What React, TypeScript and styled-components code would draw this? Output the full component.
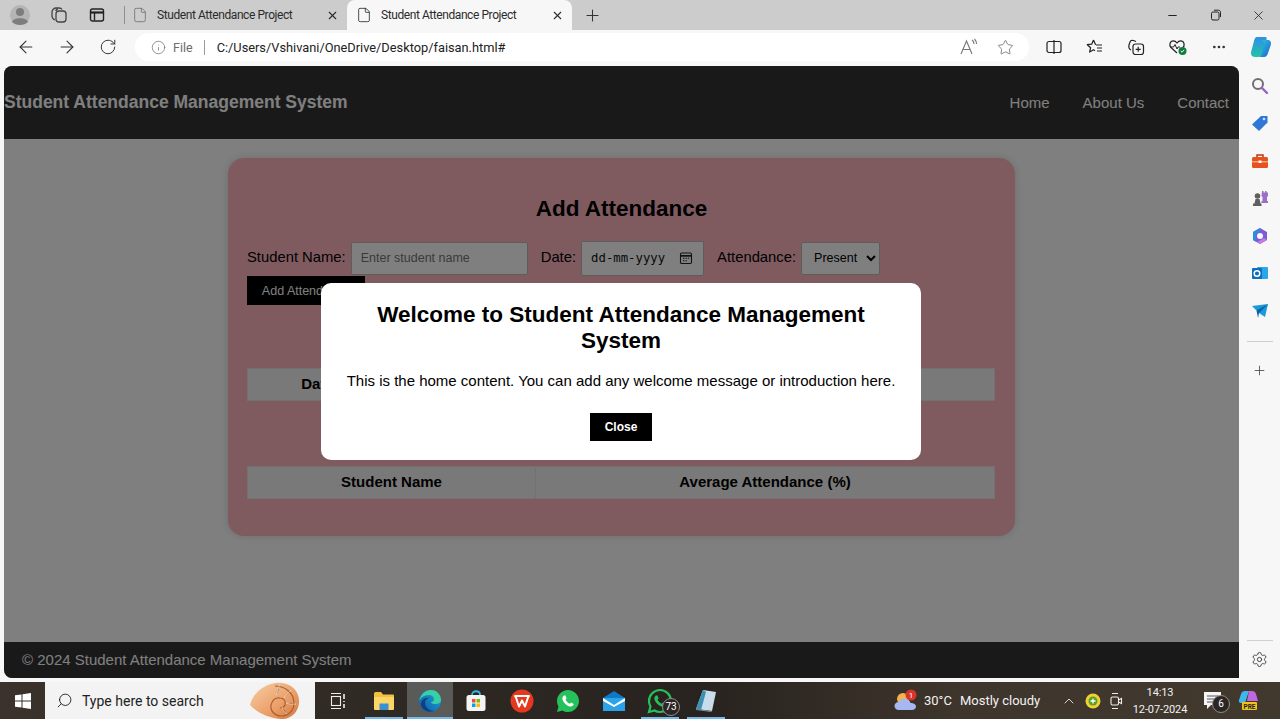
import React from "react";
import styled, { createGlobalStyle } from "styled-components";
import {
  ArrowLeft, ArrowRight, RotateCw, Info, Star, Minus, X, Plus, Search, MoreHorizontal,
  Settings, File, ChevronUp,
} from "lucide-react";

const Global = createGlobalStyle`
  html, body { margin: 0; padding: 0; height: 100%; overflow: hidden; }
  body { font-family: "Liberation Sans", Arial, sans-serif; background: #f7f7f7; }
  * { box-sizing: border-box; }
`;

const Screen = styled.div`
  width: 1280px; height: 719px; display: flex; flex-direction: column; background: #f7f7f7; overflow: hidden;
`;

/* ---------- browser tabs ---------- */
const TabStrip = styled.div`
  height: 30px; background: #cccccc; display: flex; align-items: flex-end; flex: none;
`;
const StripIcon = styled.div<{ $w: number }>`
  width: ${(p) => p.$w}px; height: 30px; display: flex; align-items: center; justify-content: center; color: #333; flex: none;
`;
const StripDivider = styled.div`
  width: 1px; height: 18px; background: #8f8f8f; margin: 0 0 6px 7px; flex: none;
`;
const Tab = styled.div<{ $active?: boolean; $w: number }>`
  width: ${(p) => p.$w}px; height: 30px; flex: none; display: flex; align-items: center;
  padding: 0 8px 0 ${(p) => (p.$active ? 9 : 7)}px;
  background: ${(p) => (p.$active ? "#f7f7f7" : "transparent")};
  border-radius: 8px 8px 0 0;
  color: #2b2b2b;
  font: 12px Roboto, sans-serif;
`;
const TabTitle = styled.span`
  flex: 1; margin-left: 9px; white-space: nowrap; letter-spacing: -0.035em;
`;
const WindowControls = styled.div`
  margin-left: auto; display: flex; height: 30px; align-items: center; color: #222;
`;
const WinBtn = styled.div`
  width: 43px; height: 30px; display: flex; align-items: center; justify-content: center;
`;

/* ---------- toolbar ---------- */
const Toolbar = styled.div`
  height: 36px; flex: none; display: flex; align-items: center; padding: 0 0 2px 5px; background: #f7f7f7; color: #333;
`;
const ToolIcon = styled.div`
  width: 41px; height: 32px; flex: none; display: flex; align-items: center; justify-content: center;
`;
const ExtIcon = styled(ToolIcon)`
  width: 41.4px;
`;
const AddressBar = styled.div`
  width: 894px; height: 28px; margin-left: 7px; margin-right: 4px; border-radius: 14px; background: #fff; display: flex; align-items: center;
  padding-left: 16px; flex: none; font: 12.8px Roboto, sans-serif; color: #222;
`;
const FileLabel = styled.span`
  margin-left: 7px; color: #6b6b6b; font-size: 12.5px;
`;
const AddrDivider = styled.span`
  width: 1px; height: 15px; background: #9a9a9a; margin: 0 12px 0 11px;
`;
const Url = styled.span`
  flex: 1; white-space: nowrap;
`;
const AddrIcon = styled.div<{ $end?: boolean }>`
  width: 37px; display: flex; align-items: center; justify-content: center; color: #666; margin-right: ${(p) => (p.$end ? 5 : 0)}px;
`;

/* ---------- main ---------- */
const Middle = styled.div`
  flex: 1; min-height: 0; display: flex; padding-left: 4px;
`;
const Page = styled.div`
  position: relative; width: 1235px; height: 612px; flex: none; background: #fff; display: flex; flex-direction: column;
  border-radius: 8px 8px 0 8px; overflow: hidden; font-size: 15px;
`;
const Navbar = styled.header`
  height: 73px; flex: none; background: #333; color: #fff; display: flex; align-items: center; justify-content: space-between; padding-right: 10px;
`;
const Brand = styled.div`
  font-weight: 700; font-size: 17.5px;
`;
const NavLinks = styled.nav`
  display: flex; gap: 33px; font-size: 15px; padding-bottom: 1px;
`;
const Content = styled.main`
  flex: 1; padding-top: 19px; display: flex; justify-content: center; align-items: flex-start;
`;
const Card = styled.section`
  width: 787px; height: 378px; background: #ffb6c1; border-radius: 16px; padding: 19px; box-shadow: 0 0 8px rgba(0,0,0,.15); color: #000;
`;
const CardTitle = styled.h2`
  margin: 18px 0 19px; font-size: 22.5px; line-height: 27px; text-align: center;
`;
const FormRow = styled.div`
  display: flex; align-items: center; gap: 13px; height: 34px;
`;
const Field = styled.div`
  display: flex; align-items: center; gap: 5px;
`;
const FieldLabel = styled.span`
  font-size: 14.8px; margin-bottom: 2px;
`;
const TextInput = styled.input`
  width: 177px; height: 33px; padding: 0 9px; border: 1px solid #bbb; border-radius: 2px; background: #fff; font: 12.5px "Liberation Sans", sans-serif;
`;
const DateBox = styled.div`
  width: 123px; height: 35px; border: 1px solid #bbb; border-radius: 2px; background: #fff; display: flex; align-items: center; justify-content: space-between;
  padding: 0 10px 0 9px; font: 12.3px "DejaVu Sans Mono", monospace; color: #111;
`;
const Select = styled.select`
  width: 79px; height: 33px; padding-left: 8px; border: 1px solid #bbb; border-radius: 2px; background: #fff; font: 12.5px "Liberation Sans", sans-serif; color: #000;
`;
const SubmitBtn = styled.button`
  display: block; margin-top: 1px; width: 118px; height: 29px; border: 0; background: #000; color: #fff; font: 12.5px "Liberation Sans", sans-serif; padding: 0;
`;
const DataTable = styled.table<{ $top: number }>`
  width: 748px; margin-top: ${(p) => p.$top}px; table-layout: fixed; border-collapse: collapse; font-size: 15px;
`;
const Th = styled.th<{ $w?: number }>`
  width: ${(p) => (p.$w ? `${p.$w}px` : "auto")}; height: 32px; padding: 0 0 2px; background: #f2f2f2; border: 1px solid #e4e4e4; font-weight: 700; text-align: center;
`;
const Footer = styled.footer`
  height: 36px; flex: none; background: #333; color: #fff; display: flex; align-items: center; padding: 0 0 2px 18px; font-size: 15px;
`;
const Overlay = styled.div`
  position: absolute; inset: 0; background: rgba(0, 0, 0, 0.5); display: flex; align-items: center; justify-content: center;
`;
const Modal = styled.div`
  width: 600px; height: 177px; background: #fff; border-radius: 10px; padding: 19px 20px 0; text-align: center; color: #000; margin: -1px 1px 0 0;
`;
const ModalTitle = styled.h2`
  margin: 0 0 18px; font-size: 22.5px; line-height: 26px;
`;
const ModalText = styled.p`
  margin: 0 0 23px; font-size: 15px; line-height: 18px; white-space: nowrap;
`;
const CloseBtn = styled.button`
  width: 62px; height: 28px; border: 0; background: #000; color: #fff; font: 700 12px "Liberation Sans", sans-serif; padding: 0;
`;

/* ---------- edge sidebar ---------- */
const Sidebar = styled.aside`
  width: 41px; flex: none; display: flex; flex-direction: column; align-items: center; padding-top: 1px; color: #444;
`;
const SideIcon = styled.div`
  width: 40px; height: 37.5px; display: flex; align-items: center; justify-content: center; flex: none;
`;
const SideDivider = styled.div<{ $top: number; $bottom: number }>`
  width: 26px; height: 1px; background: #cfcfcf; flex: none; margin: ${(p) => p.$top}px 0 ${(p) => p.$bottom}px;
`;

/* ---------- taskbar ---------- */
const Taskbar = styled.div`
  height: 37px; flex: none; margin-top: 4px; display: flex; align-items: center; color: #f2f2f2;
  background: linear-gradient(90deg, #3a322b 0%, #2e2823 35%, #28231f 55%, #3e352c 75%, #41382e 100%);
  font: 13px Roboto, sans-serif;
`;
const StartBtn = styled.div`
  width: 45px; height: 37px; display: flex; align-items: center; justify-content: center; flex: none;
`;
const SearchBox = styled.div`
  position: relative; width: 270px; height: 37px; background: #f3f3f3; color: #222; display: flex; align-items: center; padding-left: 11px; gap: 9px; font-size: 14px; flex: none;
`;
const Shell = styled.div`
  position: absolute; left: 204px; top: -1px; width: 52px; height: 39px;
`;
const TaskIcon = styled.div<{ $on?: boolean; $bar?: boolean }>`
  position: relative; width: 46px; height: 37px; flex: none; display: flex; align-items: center; justify-content: center;
  background: ${(p) => (p.$on ? "#5a5a58" : "transparent")};
  &::after {
    content: ""; display: ${(p) => (p.$bar || p.$on ? "block" : "none")}; position: absolute; left: ${(p) => (p.$on ? 0 : 4)}px; right: ${(p) => (p.$on ? 0 : 4)}px; bottom: 0; height: 2px; background: #76b9ed;
  }
`;
const Badge = styled.span<{ $x?: number; $y?: number }>`
  position: absolute; left: ${(p) => p.$x ?? 25}px; top: ${(p) => p.$y ?? 16}px; width: 18px; height: 18px; border-radius: 50%; background: #2b2622; border: 1px solid #8d8d8d; color: #fff;
  font: 10px/16px Roboto, sans-serif; text-align: center;
`;
const Tray = styled.div`
  margin-left: auto; display: flex; align-items: center; height: 37px; padding-right: 11px;
`;
const Weather = styled.div`
  display: flex; align-items: center; width: 163px;
  font-size: 13px; white-space: nowrap;
`;
const WeatherTemp = styled.span`
  margin: 0 8px 0 6px;
`;
const TrayIcon = styled.div<{ $w: number }>`
  position: relative; width: ${(p) => p.$w}px; display: flex; align-items: center; justify-content: center; flex: none;
`;
const Clock = styled.div`
  width: 74px; margin-left: -4px; text-align: center; font-size: 11px; letter-spacing: -0.1px; line-height: 17px; flex: none;
`;

/* ---------- drawn icons ---------- */
const Avatar = () => (
  <svg width="20" height="22" viewBox="0 0 20 22"><circle cx="10" cy="11" r="10" fill="#b5b5b5" /><circle cx="10" cy="8" r="4" fill="#7d7d7d" /><path d="M2 18c1-5 15-5 16 0-4 4-12 4-16 0z" fill="#7d7d7d" /></svg>
);
const Workspaces = () => (
  <svg width="18" height="18" viewBox="0 0 18 18" fill="none" stroke="#444" strokeWidth="1.3"><rect x="6" y="5" width="10" height="11" rx="3" /><path d="M5 14c-2-1-3-2-3-4V6c0-2 2-4 4-4h3c1.500 0 2.500.5 3 1.500" /><path d="M6 5c0-1 1-2 2-2" /></svg>
);
const TabActions = () => (
  <svg width="16" height="16" viewBox="0 0 16 16" fill="none" stroke="#222" strokeWidth="1.4"><rect x="1.500" y="2" width="13" height="12" rx="2" /><path d="M1.500 5.500h13" strokeWidth="2.200" /><path d="M5.500 5.500v8" /></svg>
);
const ReadAloud = () => (
  <svg width="20" height="18" viewBox="0 0 20 18" fill="none" stroke="#777" strokeWidth="1.1"><path d="M2 16 7.500 3 13 16M4 11.500h7" /><path d="M13 2c1.500 1 2 2.500 2 4M15.500 1c1.500 1.500 2 3 2 5" /></svg>
);
const SplitScreen = () => (
  <svg width="16" height="16" viewBox="0 0 16 16" fill="none" stroke="#222" strokeWidth="1.2"><rect x="1" y="2.500" width="14" height="11" rx="2" /><path d="M8 1v14" /></svg>
);
const Favorites = () => (
  <svg width="18" height="18" viewBox="0 0 18 18" fill="none" stroke="#222" strokeWidth="1.2"><path d="M7.500 2 9.500 6.500h-.2M7.500 2 5.700 6.200 1.300 6.700l3.300 3-1 4.400 3.900-2.300 1.500.9" strokeLinejoin="round" /><path d="M10 7h6M11 10h5M11 13h5" /></svg>
);
const Collections = () => (
  <svg width="18" height="18" viewBox="0 0 18 18" fill="none" stroke="#222" strokeWidth="1.2"><path d="M4 12C2 11 1.500 9 2 7l1-3c.5-1.500 2-2 3.500-1.500L9 3.500" /><rect x="6" y="6" width="10.500" height="10.500" rx="2.500" /><path d="M11.200 8.800v5M8.700 11.300h5" /></svg>
);
const Heart = () => (
  <svg width="20" height="18" viewBox="0 0 20 18" fill="none"><path d="M9 15 3 9.500C.8 7 2 3 5 2.800c1.700-.1 3 .8 4 2.200 1-1.400 2.300-2.300 4-2.200 3 .2 4.200 4 2 6.700" stroke="#222" strokeWidth="1.2" /><path d="M2.500 9h3l1.500-2.500 2 4.500 1-2h2" stroke="#222" strokeWidth="1" /><circle cx="14.500" cy="13" r="4" fill="#107c41" /><path d="m12.800 13 1.200 1.200 2.200-2.300" stroke="#fff" strokeWidth="1" /></svg>
);
const Copilot = () => (
  <svg width="24" height="24" viewBox="0 0 24 24"><defs><linearGradient id="cpa" x1="0" y1="0" x2="0" y2="1"><stop offset="0" stopColor="#2f8fe8" /><stop offset="1" stopColor="#20c4a8" /></linearGradient><linearGradient id="cpb" x1="0" y1="0" x2="1" y2="1"><stop offset="0" stopColor="#2fd0d8" /><stop offset="1" stopColor="#1d5fd6" /></linearGradient></defs><path d="M8 2h8c2 0 2 1 1.500 2.500L13 19c-.7 2.200-2 3-4 3H6c-3.500 0-4.500-3-3.800-5.500L5 6c.7-2.500 1.500-4 3-4z" fill="url(#cpa)" /><path d="M12 5h7c2.500 0 3.500 2.500 2.800 5L19 18c-.7 2.500-2 4-4 4H9c2 0 3-1 3.500-3L15 10c.5-2-.5-5-3-5z" fill="url(#cpb)" /></svg>
);
const CalendarGlyph = () => (
  <svg width="14" height="14" viewBox="0 0 14 14" fill="none" stroke="#222" strokeWidth="1.100"><rect x="1.500" y="2" width="11" height="10.500" rx="1.200" /><path d="M1.500 4.800h11" strokeWidth="1.800" /><path d="M4 7.200h1.400M6.400 7.200h1.400M8.800 7.200h1.400M4 9.800h1.400M6.400 9.800h1.400" /></svg>
);
const SideSearch = () => (
  <svg width="18" height="18" viewBox="0 0 18 18" fill="none"><circle cx="7" cy="7" r="5" stroke="#6f6f6f" strokeWidth="2" /><path d="m11 11 5 5" stroke="#9a5fc9" strokeWidth="2.400" strokeLinecap="round" /></svg>
);
const SideTag = () => (
  <svg width="18" height="18" viewBox="0 0 18 18"><path d="M1 10.500 10 2h6.500v6.500L8 17z" fill="#2f78d8" /><circle cx="13" cy="5" r="1.300" fill="#cfe2fa" /></svg>
);
const SideBriefcase = () => (
  <svg width="18" height="16" viewBox="0 0 18 16"><path d="M6 4V2h6v2" fill="none" stroke="#b83a12" strokeWidth="1.500" /><rect x="1" y="4" width="16" height="11" rx="1.500" fill="#e8501d" /><path d="M1 8.800h16" stroke="#fbc9a8" strokeWidth="1" /><rect x="7.500" y="7.500" width="3" height="2.500" fill="#fff" /></svg>
);
const SideChess = () => (
  <svg width="18" height="18" viewBox="0 0 18 18"><path d="M11 2h1.500v1.500H14V2h1.500v1.500H17V2v5l-1 1v4h1v2h-6.500v-2h1V8l-1-1z" fill="#9a6fc8" /><circle cx="6.500" cy="7" r="2.800" fill="#5f5f5f" /><path d="M4.500 10h4l1 4.500h1V17H2v-2.500h1.500z" fill="#5f5f5f" /></svg>
);
const SideM365 = () => (
  <svg width="18" height="18" viewBox="0 0 18 18"><path d="M9 1 16 5v8l-7 4-7-4V5z" fill="#7c5bd6" /><path d="M9 1 2 5v8l3 1.700V7l4-2.500z" fill="#2f8de0" /><path d="M16 13l-7 4-3-1.800L13 11z" fill="#c77ae0" /><circle cx="9" cy="9" r="3" fill="#f7f7f7" /></svg>
);
const SideOutlook = () => (
  <svg width="18" height="18" viewBox="0 0 18 18"><rect x="6" y="3" width="11" height="12" rx="1" fill="#28a8ea" /><rect x="1" y="4" width="10" height="11" rx="1" fill="#0f6cbd" /><circle cx="6" cy="9.500" r="2.800" fill="none" stroke="#fff" strokeWidth="1.500" /></svg>
);
const SideSend = () => (
  <svg width="18" height="16" viewBox="0 0 18 16"><path d="M1 3 17 1 14 14 8 10z" fill="#1a9bd8" /><path d="M5.500 7.500 17 1 8 10l-1 5z" fill="#0d5fa8" /></svg>
);
const WinLogo = () => (
  <svg width="16" height="16" viewBox="0 0 16 16" fill="#fff"><path d="M0 2.300 6.500 1.400V7.500H0zM7.500 1.200 16 0v7.500H7.500zM0 8.500h6.500v6.100L0 13.700zM7.500 8.500H16V16l-8.500-1.200z" /></svg>
);
const ShellArt = () => (
  <svg width="52" height="39" viewBox="0 0 52 39"><defs><linearGradient id="sh" x1="0" y1="0" x2="1" y2="1"><stop offset="0" stopColor="#f7cfa6" /><stop offset=".6" stopColor="#eb9f68" /><stop offset="1" stopColor="#d0763f" /></linearGradient></defs><path d="M1 24C4 10 20 0 33 2c11 1 18 10 17 20-1 10-9 17-19 16C20 37 8 32 1 24z" fill="url(#sh)" /><path d="M26 5c10 0 19 7 19 17 0 8-6 13-13 13-6 0-11-5-10-11 1-5 5-8 9-7 4 0 6 3 5 7-1 2-3 3-5 3" fill="none" stroke="#a95f30" strokeWidth="1.200" /><path d="M31 3c-2 5-3 8-3 11M42 9c-3 3-5 5-7 8M47 23c-4 0-7 0-10-1M38 33c-2-2-4-4-5-7" stroke="#fff" strokeOpacity=".6" strokeWidth="1" /></svg>
);
const TaskView = () => (
  <svg width="18" height="18" viewBox="0 0 18 18" fill="none" stroke="#eee" strokeWidth="1.100"><path d="M2 1.500h10M2 16.500h10" /><rect x="2.500" y="4.500" width="9" height="9" /><path d="M15 2v5M15 9v1M15 12v4" strokeWidth="1.600" /></svg>
);
const Explorer = () => (
  <svg width="22" height="20" viewBox="0 0 22 20"><path d="M1 3c0-1 .5-2 1.500-2H8l2 2.500h10c.5 0 1 .5 1 1V7H1z" fill="#f3bf3d" /><rect x="1" y="6" width="20" height="13" rx="1" fill="#fbd567" /><rect x="6.500" y="12.500" width="9" height="6.500" fill="#3a8fd0" /></svg>
);
const Edge = () => (
  <svg width="24" height="24" viewBox="0 0 24 24"><defs><linearGradient id="edg" x1="0" y1="1" x2="1" y2="0"><stop offset="0" stopColor="#0c59a4" /><stop offset="1" stopColor="#1fa5dc" /></linearGradient></defs><circle cx="12" cy="12" r="11" fill="url(#edg)" /><path d="M1 13C2 5 8 1 13 1c6 0 10 5 10 10 0 3-3 4-6 4-2.500 0-4-1-4-2 2 0 3-1 3-3 0-2-2.500-4-5-4-5 0-9 3-10 7z" fill="#37d0a5" /><path d="M12 9c-3 0-5 2-5 5 0 4 4 8 9 8 -7 2-12-2-13-6 0-4 3-8 9-7z" fill="#0f3f7f" /></svg>
);
const Store = () => (
  <svg width="22" height="22" viewBox="0 0 22 22"><path d="M7 5c0-5 8-5 8 0" fill="none" stroke="#39b6e8" strokeWidth="1.800" /><rect x="1.500" y="5" width="19" height="16" rx="2.500" fill="#f4f4f4" /><rect x="7" y="9" width="3.500" height="3.500" fill="#f25022" /><rect x="11.500" y="9" width="3.500" height="3.500" fill="#7fba00" /><rect x="7" y="13.500" width="3.500" height="3.500" fill="#00a4ef" /><rect x="11.500" y="13.500" width="3.500" height="3.500" fill="#ffb900" /></svg>
);
const Wps = () => (
  <svg width="24" height="24" viewBox="0 0 24 24"><circle cx="12" cy="12" r="11.500" fill="#e5391f" /><path d="M5 7h14l-1 1.500-3 9-3-6-3 6-3-9z" fill="none" stroke="#fff" strokeWidth="2" strokeLinejoin="round" /></svg>
);
const WhatsApp = ({ outline }: { outline?: boolean }) => (
  <svg width="26" height="26" viewBox="0 0 26 26"><path d="M13 2C7 2 2 7 2 13c0 2 .6 4 1.500 5.500L2 24l5.600-1.500C9 23.500 11 24 13 24c6 0 11-5 11-11S19 2 13 2z" fill={outline ? "none" : "#25c15a"} stroke={outline ? "#25c15a" : "none"} strokeWidth="2.200" /><path d="M9 7.500c-1 .5-2 2-1.500 4 .7 2.500 4 6.500 7.500 7 2 .3 3.500-1 3.800-2.500l-2.800-1.500-1.200 1.300c-2-.8-3.500-2.400-4.300-4.300l1.100-1.100L10.500 7.500z" fill={outline ? "#25c15a" : "#fff"} /></svg>
);
const Mail = () => (
  <svg width="24" height="22" viewBox="0 0 24 22"><path d="M12 1 1 8v13h22V8z" fill="#0f78c9" /><rect x="1" y="8" width="22" height="13" fill="#2aa3e8" /><path d="M1 8l11 7 11-7v3l-11 6-11-6z" fill="#fff" /></svg>
);
const Notes = () => (
  <svg width="22" height="24" viewBox="0 0 22 24"><path d="M8 1 21 3 17 22 1 20z" fill="#c9dcea" /><path d="M8 1 1 20l5 1L11 3z" fill="#3d90b4" /><path d="M1 20 17 22l-1 1L1 21z" fill="#6f8ea0" /></svg>
);
const WeatherIcon = () => (
  <svg width="24" height="24" viewBox="0 0 24 24"><circle cx="9" cy="10" r="6" fill="#f7b24c" /><path d="M5 21c-3 0-4.500-2-4.500-4S2 13 5 13c1-3 4-4 6.500-3.500 3 .5 4.500 2.500 5 4.500 3 0 5.500 1.500 5.500 3.500S20 21 18 21z" fill="#a7b8f0" /><circle cx="17" cy="6" r="5.500" fill="#d8352a" /><text x="17" y="9" fontSize="8" fill="#fff" textAnchor="middle" fontFamily="Roboto">1</text></svg>
);
const GreenTray = () => (
  <svg width="16" height="16" viewBox="0 0 16 16"><circle cx="8" cy="8" r="7.500" fill="#f2d02f" /><circle cx="8" cy="8" r="4.500" fill="#5a9e2f" /><path d="M8 5.500v5M5.500 8h5" stroke="#fff" strokeWidth="1.300" /></svg>
);
const MeetIcon = () => (
  <svg width="14" height="18" viewBox="0 0 14 18" fill="none" stroke="#eee" strokeWidth="1.100"><path d="M3 1.500h6M3 16.500h6" /><rect x="2" y="5" width="7.500" height="8" rx="1.500" /><path d="m9.500 8 3-1.500v5L9.500 10" /></svg>
);
const Bell = () => (
  <svg width="20" height="20" viewBox="0 0 20 20"><path d="M1 1h17v13H8l-4 4v-4H1z" fill="#f5f5f5" /><path d="M4 5h11M4 8h11M4 11h7" stroke="#555" strokeWidth="1" /></svg>
);
const CopilotPre = () => (
  <svg width="22" height="22" viewBox="0 0 22 22"><path d="M7 1h4l-4 12H3c-2 0-2.500-1.500-2-3l2-6c.5-2 2-3 4-3z" fill="#3fb7ea" /><path d="M11 1h3c2 0 3.500 1 4 3l2 7H9z" fill="#c068e0" /><rect x="4" y="12" width="15" height="8" rx="1" fill="#f2c21b" /><text x="11.500" y="18.500" fontSize="6.500" fontWeight="700" textAnchor="middle" fill="#222" fontFamily="Roboto">PRE</text></svg>
);

export default function App() {
  return (
    <Screen>
      <Global />
      <TabStrip>
        <StripIcon $w={40}><Avatar /></StripIcon>
        <StripIcon $w={37}><Workspaces /></StripIcon>
        <StripIcon $w={40}><TabActions /></StripIcon>
        <StripDivider />
        <Tab $w={222}>
          <File size={16} strokeWidth={1.1} color="#666" />
          <TabTitle>Student Attendance Project</TabTitle>
          <X size={13} />
        </Tab>
        <Tab $active $w={225}>
          <File size={16} strokeWidth={1.2} color="#222" />
          <TabTitle>Student Attendance Project</TabTitle>
          <X size={13} />
        </Tab>
        <StripIcon $w={40}><Plus size={19} strokeWidth={1.3} /></StripIcon>
        <WindowControls>
          <WinBtn><Minus size={13} /></WinBtn>
          <WinBtn>
            <svg width="12" height="12" viewBox="0 0 12 12" fill="none" stroke="#222" strokeWidth="1"><rect x="1.500" y="3" width="7.500" height="8" rx="1.500" /><path d="M4 1.200h4.500c1.200 0 2 .8 2 2V8" /></svg>
          </WinBtn>
          <WinBtn><X size={15} strokeWidth={1.3} /></WinBtn>
        </WindowControls>
      </TabStrip>
      <Toolbar>
        <ToolIcon><ArrowLeft size={20} strokeWidth={1.3} /></ToolIcon>
        <ToolIcon><ArrowRight size={20} strokeWidth={1.3} /></ToolIcon>
        <ToolIcon><RotateCw size={18} strokeWidth={1.3} /></ToolIcon>
        <AddressBar>
          <Info size={15} strokeWidth={1.1} color="#666" />
          <FileLabel>File</FileLabel>
          <AddrDivider />
          <Url>C:/Users/Vshivani/OneDrive/Desktop/faisan.html#</Url>
          <AddrIcon><ReadAloud /></AddrIcon>
          <AddrIcon $end><Star size={17} strokeWidth={1.1} /></AddrIcon>
        </AddressBar>
        <ExtIcon><SplitScreen /></ExtIcon>
        <ExtIcon><Favorites /></ExtIcon>
        <ExtIcon><Collections /></ExtIcon>
        <ExtIcon><Heart /></ExtIcon>
        <ExtIcon><MoreHorizontal size={16} strokeWidth={2} /></ExtIcon>
        <ExtIcon><Copilot /></ExtIcon>
      </Toolbar>
      <Middle>
        <Page>
          <Navbar>
            <Brand>Student Attendance Management System</Brand>
            <NavLinks><span>Home</span><span>About Us</span><span>Contact</span></NavLinks>
          </Navbar>
          <Content>
            <Card>
              <CardTitle>Add Attendance</CardTitle>
              <FormRow>
                <Field><FieldLabel>Student Name:</FieldLabel><TextInput placeholder="Enter student name" /></Field>
                <Field><FieldLabel>Date:</FieldLabel><DateBox><span>dd-mm-yyyy</span><CalendarGlyph /></DateBox></Field>
                <Field><FieldLabel>Attendance:</FieldLabel><Select defaultValue="Present"><option>Present</option><option>Absent</option></Select></Field>
              </FormRow>
              <SubmitBtn>Add Attendance</SubmitBtn>
              <DataTable $top={63}>
                <thead><tr><Th $w={140}>Date</Th><Th $w={358} /><Th /></tr></thead>
              </DataTable>
              <DataTable $top={65}>
                <thead><tr><Th $w={288}>Student Name</Th><Th>Average Attendance (%)</Th></tr></thead>
              </DataTable>
            </Card>
          </Content>
          <Footer>© 2024 Student Attendance Management System</Footer>
          <Overlay>
            <Modal>
              <ModalTitle>Welcome to Student Attendance Management System</ModalTitle>
              <ModalText>This is the home content. You can add any welcome message or introduction here.</ModalText>
              <CloseBtn>Close</CloseBtn>
            </Modal>
          </Overlay>
        </Page>
        <Sidebar>
          <SideIcon><SideSearch /></SideIcon>
          <SideIcon><SideTag /></SideIcon>
          <SideIcon><SideBriefcase /></SideIcon>
          <SideIcon><SideChess /></SideIcon>
          <SideIcon><SideM365 /></SideIcon>
          <SideIcon><SideOutlook /></SideIcon>
          <SideIcon><SideSend /></SideIcon>
          <SideDivider $top={11} $bottom={10} />
          <SideIcon><Plus size={15} strokeWidth={1.3} /></SideIcon>
          <SideDivider $top={251} $bottom={0} />
          <SideIcon><Settings size={17} strokeWidth={1.4} /></SideIcon>
        </Sidebar>
      </Middle>
      <Taskbar>
        <StartBtn><WinLogo /></StartBtn>
        <SearchBox>
          <Search size={17} strokeWidth={1.3} style={{ transform: "scaleX(-1)" }} />
          Type here to search
          <Shell><ShellArt /></Shell>
        </SearchBox>
        <TaskIcon><TaskView /></TaskIcon>
        <TaskIcon $bar><Explorer /></TaskIcon>
        <TaskIcon $on><Edge /></TaskIcon>
        <TaskIcon><Store /></TaskIcon>
        <TaskIcon><Wps /></TaskIcon>
        <TaskIcon><WhatsApp /></TaskIcon>
        <TaskIcon><Mail /></TaskIcon>
        <TaskIcon $bar><WhatsApp outline /><Badge>73</Badge></TaskIcon>
        <TaskIcon $bar><Notes /></TaskIcon>
        <Tray>
          <Weather><WeatherIcon /><WeatherTemp>30°C</WeatherTemp>Mostly cloudy</Weather>
          <TrayIcon $w={24}><ChevronUp size={16} strokeWidth={1.3} /></TrayIcon>
          <TrayIcon $w={23}><GreenTray /></TrayIcon>
          <TrayIcon $w={23}><MeetIcon /></TrayIcon>
          <Clock>14:13<br />12-07-2024</Clock>
          <TrayIcon $w={32}><Bell /><Badge $x={15} $y={4}>6</Badge></TrayIcon>
          <TrayIcon $w={40}><CopilotPre /></TrayIcon>
        </Tray>
      </Taskbar>
    </Screen>
  );
}
